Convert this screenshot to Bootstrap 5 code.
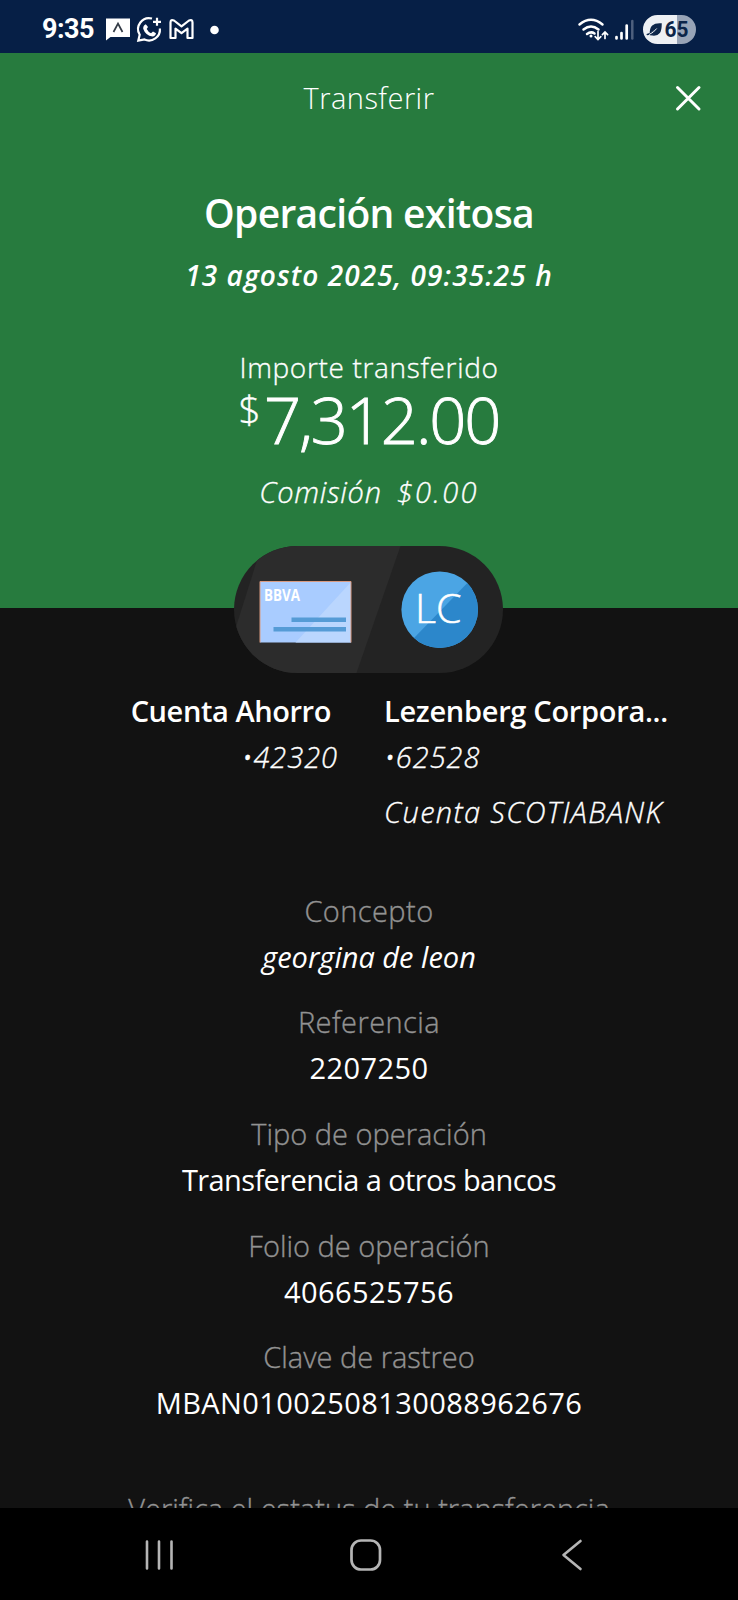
<!DOCTYPE html>
<html lang="es">
<head>
<meta charset="utf-8">
<meta name="viewport" content="width=device-width, initial-scale=1">
<title>Transferir</title>
<link href="https://cdn.jsdelivr.net/npm/bootstrap@5.3.0/dist/css/bootstrap.min.css" rel="stylesheet">
<script src="https://cdn.jsdelivr.net/npm/bootstrap@5.3.0/dist/js/bootstrap.bundle.min.js" defer></script>
<style>
body{background:#121212;color:#fff;font-family:"Open Sans","Noto Sans",sans-serif;font-size:29px;font-weight:300;line-height:46px;height:1600px;overflow:hidden;-webkit-text-stroke:.35px}
span{white-space:nowrap}
svg{display:block;flex-shrink:0}
.screen{height:1508px}
.statusbar{height:52.5px;background:#061f46;padding:9px 41px 0 42px;-webkit-text-stroke:0}
.clock{font:700 27px/40px Roboto,sans-serif;letter-spacing:-.5px;width:63px}
.hero{height:555.5px;background:#277b3e;line-height:40px}
.titlebar{height:90px;letter-spacing:.45px;-webkit-text-stroke:0}
.close-x{right:36px;top:31.500px}
.headline{font-size:39px;font-weight:600;line-height:50px;margin:45px 0 17px;letter-spacing:-.68px;-webkit-text-stroke:0}
.stamp{font-size:28px;font-weight:600;font-style:italic;margin-bottom:52px;letter-spacing:1.08px;-webkit-text-stroke:0}
.caption28{font-size:28px;letter-spacing:.66px}
.amount{font-size:65px;line-height:60px;height:60px;margin:2px 0 23px;letter-spacing:-2.07px;-webkit-text-stroke:.9px}
.currency{font-size:39px;line-height:40px;letter-spacing:0;margin-right:3px;-webkit-text-stroke:.4px}
.fee{gap:15px;letter-spacing:.75px}
.fee-value{letter-spacing:2.3px}
.pill{margin-top:-62px;left:-.5px}
.parties{margin-top:14.5px;gap:46px}
.origin{width:338px}
.party-name{font-weight:600;letter-spacing:-.3px;-webkit-text-stroke:0}
.origin .party-name{padding-right:7px;letter-spacing:-.42px}
.acct{letter-spacing:.95px}
.bank{letter-spacing:1.33px;margin-top:9px}
.details{margin-top:53px;gap:19.7px}
.label-dim{color:#929292}
.val{font-weight:400;-webkit-text-stroke:0}
.wider{letter-spacing:.42px}
.tighter{letter-spacing:-.61px}
.footnote{margin-top:59.500px}
.navkeys{height:92px;background:#000;padding:2px 155px 0 145px}
.home-key{position:relative;left:-2px}
</style>
</head>
<body>
<div class="screen overflow-hidden d-flex flex-column">
<div class="statusbar flex-shrink-0 d-flex align-items-start">
<div class="clock">9:35</div>
<svg width="120" height="40" viewBox="105 9 120 40" fill="none" stroke="#fff">
<path d="M106 18.500h24V37h-19.500l-4.500 3.500z" fill="#fff" stroke="none"/>
<path d="M113.500 32l4.500-8.500 4.500 8.500" stroke="#333b46" stroke-width="1.700"/>
<path d="M152 18.500A11 11 0 0 0 139.700 34.800L138.300 40.700 144.500 39.500A11 11 0 0 0 159.900 28.500" stroke-width="2.200"/>
<path d="M157 17.800v8M153 21.800h8" stroke-width="2.200"/>
<path d="M145.800 24.200l2.200 2.700-1.300 2.100q1.500 3 4.300 4.200l2-1.600 3 1.700q-.5 3-3.500 3.200-7-1-9.300-7.800-.2-3.200 2.600-4.500z" fill="#fff" stroke="none"/>
<path d="M170.500 38V22.500q0-3.500 3.500-2l7.500 5.800 7.500-5.800q3.500-1.500 3.500 2V38h-5V28.700l-6 4.500-6-4.500V38z" stroke-width="2.200" stroke-linejoin="round"/>
<circle cx="214.500" cy="30" r="4.300" fill="#fff" stroke="none"/>
</svg>
<svg class="ms-auto" width="122" height="40" viewBox="575 9 122 40" fill="none" stroke="#fff" stroke-linecap="round">
<path d="M579.500 24.500q11.500-9.500 23 0M583.500 29.500q7.500-6 15 0M587 34q4-3 7.500-.5" stroke-width="2.500"/>
<circle cx="591" cy="36" r="1.500" fill="#fff" stroke="none"/>
<path d="M598 31.500v8m-2.800-2.800l2.800 2.800 2.800-2.800M605 38.500v-6.500m-2.600 2.600l2.600-2.600 2.600 2.600" stroke-width="1.700"/>
<path d="M616.500 37v1.500M621.500 33v5.500M626.700 25.500v13" stroke-width="2.700"/>
<path d="M632.300 21v17.500" stroke-width="2.500" stroke="#4e607e"/>
<path d="M677 15H657.500a14.500 14.500 0 0 0 0 29H677z" fill="#edf0f4" stroke="none"/>
<path d="M677 15h4.500a14.500 14.500 0 0 1 0 29H677z" fill="#98a4b7" stroke="none"/>
<path d="M650.500 34.500c-.5-8 3-11 10.500-10.500 0 8-2 11.500-8.500 10.800zM647.300 34.500q4-.5 9-5.500" fill="#0c2549" stroke="#0c2549" stroke-width="1.500"/>
<path d="M649.500 34.300q4-1.500 7-5.500" stroke="#edf0f4" stroke-width="1"/>
<text x="664.500" y="37" textLength="24" lengthAdjust="spacingAndGlyphs" font-family="Roboto" font-weight="700" font-size="22" fill="#0c2549" stroke="none">65</text>
</svg>
</div>
<header class="hero flex-shrink-0 text-center">
<div class="titlebar d-flex align-items-center justify-content-center position-relative"><span>Transferir</span>
<svg class="close-x position-absolute" width="28" height="28" viewBox="0 0 28 28" fill="none" stroke="#fff" stroke-width="3" stroke-linecap="round"><path d="M3.500 3.500l21.500 21.500M25 3.500L3.500 25"/></svg></div>
<div class="headline"><span>Operación exitosa</span></div>
<div class="stamp"><span>13 agosto 2025, 09:35:25 h</span></div>
<div class="caption28"><span>Importe transferido</span></div>
<div class="amount d-flex justify-content-center"><span class="currency">$</span><span>7,312.00</span></div>
<div class="fee fst-italic d-flex justify-content-center"><span>Comisión</span><span class="fee-value">$0.00</span></div>
</header>
<svg class="pill position-relative mx-auto" width="269" height="127" viewBox="234.500 546 269 127">
<defs>
<clipPath id="capsule"><rect x="234.500" y="546" width="269" height="127" rx="63.500"/></clipPath>
<clipPath id="disc"><circle cx="440.200" cy="609.700" r="38.300"/></clipPath>
</defs>
<g clip-path="url(#capsule)">
<path d="M234 546h270v127H234z" fill="#232323"/>
<path d="M262 546h139l-44 127H222z" fill="#2c2c2c"/>
</g>
<path d="M260.500 581.500h91v61h-91z" fill="#a9ccff"/>
<path d="M351.500 582v60.500H296z" fill="#bad6fe"/>
<path d="M292 617.500h54.500v4.500H292zM274 627h72.500v4.500H274z" fill="#559bd6"/>
<path d="M260.500 642.500v-61h91v61" fill="none" stroke="#d99a80"/>
<text x="264.500" y="601" textLength="36" lengthAdjust="spacingAndGlyphs" font-weight="700" font-size="16.500" fill="#fff">BBVA</text>
<g clip-path="url(#disc)"><path d="M400 570h80v80h-80z" fill="#4ba5e4"/><path d="M490 560v95h-90v-2z" fill="#2c87cb"/></g>
<text x="415.500" y="622.500" textLength="46.500" lengthAdjust="spacingAndGlyphs" font-size="39.500" fill="#fff" stroke="#fff" stroke-width=".5">LC</text>
</svg>
<section class="parties d-flex flex-shrink-0">
<div class="origin text-end"><div class="party-name"><span>Cuenta Ahorro</span></div><div class="acct fst-italic"><span>•42320</span></div></div>
<div><div class="party-name"><span>Lezenberg Corpora...</span></div><div class="acct fst-italic"><span>•62528</span></div><div class="bank fst-italic"><span>Cuenta SCOTIABANK</span></div></div>
</section>
<section class="details d-flex flex-column text-center flex-shrink-0">
<div><div class="label-dim wider"><span>Concepto</span></div><div class="val fst-italic"><span>georgina de leon</span></div></div>
<div><div class="label-dim wider"><span>Referencia</span></div><div class="val wider"><span>2207250</span></div></div>
<div><div class="label-dim"><span>Tipo de operación</span></div><div class="val tighter"><span>Transferencia a otros bancos</span></div></div>
<div><div class="label-dim"><span>Folio de operación</span></div><div class="val wider"><span>4066525756</span></div></div>
<div><div class="label-dim"><span>Clave de rastreo</span></div><div class="val wider"><span>MBAN01002508130088962676</span></div></div>
</section>
<div class="footnote label-dim text-center"><span>Verifica el estatus de tu transferencia</span></div>
</div>
<nav class="navkeys d-flex align-items-center justify-content-between">
<svg width="30" height="34" viewBox="0 0 30 34" fill="none" stroke="#b5b5b5" stroke-width="2.600" stroke-linecap="round"><path d="M2 3.500v27M14 3.500v27M26.500 3.500v27"/></svg>
<svg class="home-key" width="34" height="34" viewBox="0 0 34 34" fill="none" stroke="#b5b5b5" stroke-width="2.700"><rect x="2.500" y="2.500" width="28.500" height="29" rx="9.500"/></svg>
<svg width="22" height="34" viewBox="0 0 22 34" fill="none" stroke="#b5b5b5" stroke-width="2.600" stroke-linecap="round" stroke-linejoin="round"><path d="M19.500 3L2.500 17l17 14"/></svg>
</nav>
</body>
</html>
